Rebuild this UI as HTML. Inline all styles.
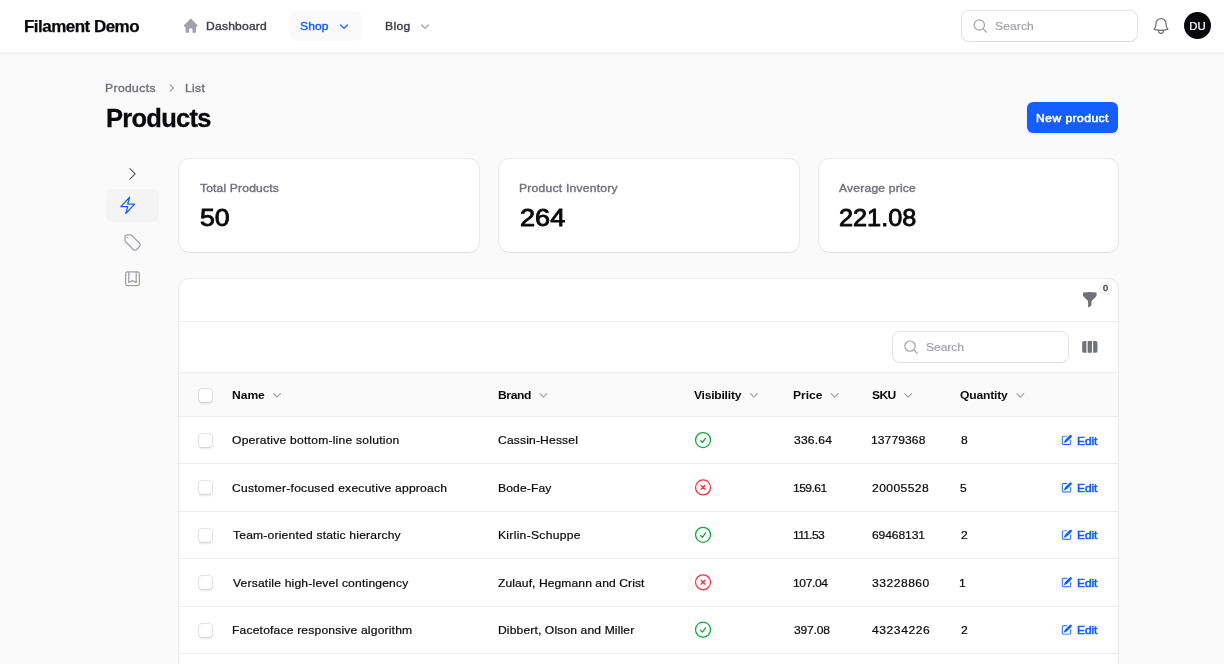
<!DOCTYPE html>
<html lang="en">
<head>
<meta charset="utf-8">
<title>Products - Filament Demo</title>
<style>
*{box-sizing:border-box;margin:0;padding:0}
html,body{width:1224px;height:664px;overflow:hidden}
body{background:#fafafa;font-family:"Liberation Sans",sans-serif;color:#09090b;position:relative;font-size:12px}
.app{position:absolute;left:0;top:0;width:1224px;height:664px;overflow:hidden;will-change:transform}
.abs,.t{position:absolute}
.t{white-space:nowrap;line-height:16px;font-size:11.200px;-webkit-text-stroke:.2px currentColor;transform:scaleX(1.08);transform-origin:0 0}
.c{text-align:center;transform-origin:50% 0}
svg{position:absolute;display:block;overflow:visible}
.topbar{position:absolute;left:0;top:0;width:1224px;height:52px;background:#fff;box-shadow:0 1px 0 #f4f4f5,0 2px 0 #eeeeef}
.card{position:absolute;background:#fff;border-radius:10px;box-shadow:0 0 0 1px rgba(9,9,11,.06),0 1px 2px rgba(9,9,11,.06)}
.input{position:absolute;background:#fff;border-radius:7px;box-shadow:0 0 0 1px rgba(9,9,11,.1),0 1px 2px rgba(9,9,11,.05)}
.gray{color:#71717a}
.ph{color:#a1a1aa}
.blue{color:#155dfc}
.b{font-weight:bold;-webkit-text-stroke:0}
.m{-webkit-text-stroke:.38px currentColor}
.sb{-webkit-text-stroke:.55px currentColor}
.hl{position:absolute;left:179px;width:939px;height:1px;background:#ececee}
.cb{position:absolute;left:199px;width:13px;height:13px;border-radius:3px;background:#fff;box-shadow:0 0 0 .75px rgba(9,9,11,.13),0 1.500px 2px rgba(9,9,11,.09)}
</style>
</head>
<body>
<div class="app">
<!-- TOPBAR -->
<div class="topbar"></div>
<div class="t b" id="brand" style="left:23.59px;top:14px;font-size:16.200px;line-height:24px;-webkit-text-stroke:.25px currentColor;letter-spacing:-0.496px;transform:scaleX(1.05)">Filament Demo</div>
<svg style="left:182px;top:17px" width="19" height="19" viewBox="-0.000 -0.000 21.714 21.714" fill="#a1a1aa"><path fill-rule="evenodd" clip-rule="evenodd" d="M9.293 2.293a1 1 0 0 1 1.414 0l7 7A1 1 0 0 1 17 11h-1v6a1 1 0 0 1-1 1h-2a1 1 0 0 1-1-1v-3a1 1 0 0 0-1-1H9a1 1 0 0 0-1 1v3a1 1 0 0 1-1 1H5a1 1 0 0 1-1-1v-6H3a1 1 0 0 1-.707-1.707l7-7Z"/></svg>
<div class="t m" id="dash" style="left:205.52px;top:18.100px;color:#3f3f46;letter-spacing:0.199px">Dashboard</div>
<div class="abs" style="left:290px;top:11px;width:72px;height:30px;border-radius:7px;background:#fafafa"></div>
<div class="t blue m" id="shop" style="left:299.86px;top:18.100px;letter-spacing:0.089px">Shop</div>
<svg style="left:336px;top:18px" width="17" height="17" viewBox="-0.000 -0.000 21.250 21.250" fill="#155dfc"><path fill-rule="evenodd" clip-rule="evenodd" d="M5.22 8.22a.75.75 0 0 1 1.06 0L10 11.94l3.72-3.72a.75.75 0 1 1 1.06 1.06l-4.25 4.25a.75.75 0 0 1-1.06 0L5.22 9.28a.75.75 0 0 1 0-1.06Z"/></svg>
<div class="t m" id="blog" style="left:384.59px;top:18.100px;color:#3f3f46;letter-spacing:0.342px">Blog</div>
<svg style="left:417px;top:18px" width="17" height="17" viewBox="-0.000 -0.000 21.250 21.250" fill="#a1a1aa"><path fill-rule="evenodd" clip-rule="evenodd" d="M5.22 8.22a.75.75 0 0 1 1.06 0L10 11.94l3.72-3.72a.75.75 0 1 1 1.06 1.06l-4.25 4.25a.75.75 0 0 1-1.06 0L5.22 9.28a.75.75 0 0 1 0-1.06Z"/></svg>
<div class="input" style="left:962px;top:11px;width:175px;height:30px"></div>
<svg style="left:972px;top:17px" width="18" height="18" viewBox="-0.145 -1.164 26.182 26.182" fill="none" stroke="#a1a1aa" stroke-width="1.7" stroke-linecap="round" stroke-linejoin="round"><path d="m21 21-5.197-5.197m0 0A7.500 7.500 0 1 0 5.196 5.196a7.500 7.500 0 0 0 10.607 10.607Z"/></svg>
<div class="t ph" id="search1" style="left:994.54px;top:18.300px;letter-spacing:0.091px">Search</div>
<svg style="left:1151px;top:16px" width="21" height="21" viewBox="-0.000 -0.000 25.200 25.200" fill="none" stroke="#71717a" stroke-width="1.5" stroke-linecap="round" stroke-linejoin="round"><path d="M14.857 17.082a23.848 23.848 0 0 0 5.454-1.310A8.967 8.967 0 0 1 18 9.750V9A6 6 0 0 0 6 9v.750a8.967 8.967 0 0 1-2.312 6.022c1.733.640 3.560 1.085 5.455 1.310m5.714 0a24.255 24.255 0 0 1-5.714 0m5.714 0a3 3 0 1 1-5.714 0"/></svg>
<div class="abs" style="left:1184px;top:12.200px;width:27px;height:27px;border-radius:50%;background:#09090b"></div>
<div class="t c" id="du" style="left:1184px;top:17.700px;width:27px;color:#fff;font-size:10.500px">DU</div>

<!-- HEADER -->
<div class="t gray m" id="bc1" style="left:104.79px;top:80.300px;letter-spacing:0.370px">Products</div>
<svg style="left:163px;top:80px" width="17" height="17" viewBox="-0.000 -0.000 21.250 21.250" fill="#a1a1aa"><path fill-rule="evenodd" clip-rule="evenodd" d="M8.220 5.220a.75.75 0 0 1 1.060 0l4.250 4.250a.75.75 0 0 1 0 1.060l-4.250 4.250a.75.75 0 0 1-1.060-1.060L11.940 10 8.220 6.280a.75.75 0 0 1 0-1.060Z"/></svg>
<div class="t gray m" id="bc2" style="left:185.02px;top:80.300px;letter-spacing:0.328px">List</div>
<div class="t b" id="h1" style="left:106.09px;top:101.700px;font-size:25.500px;line-height:32px;-webkit-text-stroke:.3px currentColor;letter-spacing:-0.745px;transform:none">Products</div>
<div class="abs" style="left:1027px;top:102px;width:91px;height:30.500px;border-radius:6px;background:#155dfc;box-shadow:0 1px 2px rgba(9,9,11,.08)"></div>
<div class="t sb c" id="newp" style="left:1027px;top:109.900px;width:91px;color:#fff;letter-spacing:.42px">New product</div>

<!-- SUBNAV -->
<svg style="left:124px;top:165px" width="18" height="18" viewBox="-0.000 -0.565 25.412 25.412" fill="none" stroke="#52525b" stroke-width="1.5" stroke-linecap="round" stroke-linejoin="round"><path d="m8.250 4.500 7.500 7.500-7.500 7.500"/></svg>
<div class="abs" style="left:106px;top:189px;width:53px;height:33px;border-radius:7px;background:#f4f4f5"></div>
<svg style="left:117px;top:195px" width="21" height="21" viewBox="-0.840 -0.480 25.200 25.200" fill="none" stroke="#155dfc" stroke-width="1.5" stroke-linecap="round" stroke-linejoin="round"><path d="m3.750 13.500 10.500-11.250L12 10.500h8.250L9.750 21.750 12 13.500H3.750Z"/></svg>
<svg style="left:122px;top:232px" width="21" height="21" viewBox="-0.600 -0.480 25.200 25.200" fill="none" stroke="#a1a1aa" stroke-width="1.5" stroke-linecap="round" stroke-linejoin="round"><path d="M9.568 3H5.250A2.250 2.250 0 0 0 3 5.250v4.318c0 .597.237 1.170.659 1.591l9.581 9.581c.699.699 1.780.872 2.607.330a18.095 18.095 0 0 0 5.223-5.223c.542-.827.369-1.908-.330-2.607L11.160 3.660A2.250 2.250 0 0 0 9.568 3Z"/><path d="M6 6h.008v.008H6V6Z"/></svg>
<svg style="left:122px;top:268px" width="21" height="21" viewBox="-0.600 -0.960 25.200 25.200" fill="none" stroke="#a1a1aa" stroke-width="1.5" stroke-linecap="round" stroke-linejoin="round"><path d="M16.500 3.750V16.500L12 14.250 7.500 16.500V3.750m9 0H18A2.250 2.250 0 0 1 20.250 6v12A2.250 2.250 0 0 1 18 20.250H6A2.250 2.250 0 0 1 3.750 18V6A2.250 2.250 0 0 1 6 3.750h1.500m9 0h-9"/></svg>

<!-- STATS -->
<div class="card" style="left:179px;top:159px;width:300px;height:93px"></div>
<div class="card" style="left:499px;top:159px;width:300px;height:93px"></div>
<div class="card" style="left:819px;top:159px;width:299px;height:93px"></div>
<div class="t gray m" id="s1l" style="left:199.66px;top:180.100px;letter-spacing:0.152px">Total Products</div>
<div class="t" id="s1v" style="-webkit-text-stroke:.85px currentColor;left:199.900px;top:201.500px;font-size:24.300px;line-height:32px;transform:scaleX(1.10);transform-origin:0 0">50</div>
<div class="t gray m" id="s2l" style="left:519.21px;top:180.100px;letter-spacing:0.224px">Product Inventory</div>
<div class="t" id="s2v" style="-webkit-text-stroke:.85px currentColor;left:519.600px;top:201.500px;font-size:24.300px;line-height:32px;transform:scaleX(1.117);transform-origin:0 0">264</div>
<div class="t gray m" id="s3l" style="left:838.76px;top:180.100px;letter-spacing:0.194px">Average price</div>
<div class="t" id="s3v" style="-webkit-text-stroke:.85px currentColor;left:838.900px;top:201.500px;font-size:24.300px;line-height:32px;transform:scaleX(1.04);transform-origin:0 0">221.08</div>

<!-- TABLE -->
<div class="card" style="left:179px;top:279px;width:939px;height:420px"></div>
<svg style="left:1081px;top:291px" width="18" height="18" viewBox="-0.353 -0.235 21.176 21.176" fill="#71717a"><path fill-rule="evenodd" clip-rule="evenodd" d="M2.628 1.601C5.028 1.206 7.490 1 10 1s4.973.206 7.372.601a.75.75 0 0 1 .628.740v2.288a2.250 2.250 0 0 1-.659 1.590l-4.682 4.683a2.250 2.250 0 0 0-.659 1.590v3.037c0 .684-.310 1.330-.844 1.757l-1.937 1.550A.75.75 0 0 1 8 18.250v-5.757a2.250 2.250 0 0 0-.659-1.591L2.659 6.220A2.250 2.250 0 0 1 2 4.629V2.340a.75.75 0 0 1 .628-.740Z"/></svg>
<div class="abs" style="left:1099.500px;top:282.800px;width:11px;height:11px;border-radius:50%;background:#fafafa;box-shadow:0 0 0 1px rgba(9,9,11,.08)"></div>
<div class="t m c" id="badge" style="left:1099.500px;top:282.300px;width:11px;line-height:12px;font-size:8.500px;color:#3f3f46">0</div>
<div class="hl" style="top:321px"></div>
<div class="input" style="left:893px;top:332px;width:175px;height:30px"></div>
<svg style="left:902px;top:338px" width="18" height="18" viewBox="-1.164 -1.309 26.182 26.182" fill="none" stroke="#a1a1aa" stroke-width="1.7" stroke-linecap="round" stroke-linejoin="round"><path d="m21 21-5.197-5.197m0 0A7.500 7.500 0 1 0 5.196 5.196a7.500 7.500 0 0 0 10.607 10.607Z"/></svg>
<div class="t ph" id="search2" style="left:925.92px;top:339.300px;letter-spacing:-0.043px">Search</div>
<svg style="left:1081px;top:338px" width="18" height="18" viewBox="-0.353 -0.471 21.176 21.176" fill="#71717a"><path d="M14 17h2.750A2.250 2.250 0 0 0 19 14.750v-9.500A2.250 2.250 0 0 0 16.750 3H14v14ZM12.500 3h-5v14h5V3ZM3.250 3H6v14H3.250A2.250 2.250 0 0 1 1 14.750v-9.500A2.250 2.250 0 0 1 3.250 3Z"/></svg>
<div class="hl" style="top:372px"></div>
<div class="abs" style="left:179px;top:373px;width:939px;height:43px;background:#fafafa"></div>
<div class="hl" style="top:416px"></div>
<div class="cb" style="top:389px"></div>
<div class="t b" id="th0" style="left:231.79px;top:386.8px;letter-spacing:-0.028px">Name</div>
<svg style="left:269px;top:386px" width="17" height="17" viewBox="-0.000 -0.750 21.250 21.250" fill="#a1a1aa"><path fill-rule="evenodd" clip-rule="evenodd" d="M5.22 8.22a.75.75 0 0 1 1.06 0L10 11.94l3.72-3.72a.75.75 0 1 1 1.06 1.06l-4.25 4.25a.75.75 0 0 1-1.06 0L5.220 9.280a.75.75 0 0 1 0-1.060Z"/></svg>
<div class="t b" id="th1" style="left:497.85px;top:386.8px;letter-spacing:-0.327px">Brand</div>
<svg style="left:535px;top:386px" width="17" height="17" viewBox="-0.500 -0.750 21.250 21.250" fill="#a1a1aa"><path fill-rule="evenodd" clip-rule="evenodd" d="M5.22 8.22a.75.75 0 0 1 1.06 0L10 11.94l3.72-3.72a.75.75 0 1 1 1.06 1.06l-4.25 4.25a.75.75 0 0 1-1.06 0L5.220 9.280a.75.75 0 0 1 0-1.060Z"/></svg>
<div class="t b" id="th2" style="left:694.25px;top:386.8px;letter-spacing:-0.214px">Visibility</div>
<svg style="left:745px;top:386px" width="17" height="17" viewBox="-1.125 -0.750 21.250 21.250" fill="#a1a1aa"><path fill-rule="evenodd" clip-rule="evenodd" d="M5.22 8.22a.75.75 0 0 1 1.06 0L10 11.94l3.72-3.72a.75.75 0 1 1 1.06 1.06l-4.25 4.25a.75.75 0 0 1-1.06 0L5.220 9.280a.75.75 0 0 1 0-1.060Z"/></svg>
<div class="t b" id="th3" style="left:793.00px;top:386.8px;letter-spacing:-0.036px">Price</div>
<svg style="left:826px;top:386px" width="17" height="17" viewBox="-0.875 -0.750 21.250 21.250" fill="#a1a1aa"><path fill-rule="evenodd" clip-rule="evenodd" d="M5.22 8.22a.75.75 0 0 1 1.06 0L10 11.94l3.72-3.72a.75.75 0 1 1 1.06 1.06l-4.25 4.25a.75.75 0 0 1-1.06 0L5.220 9.280a.75.75 0 0 1 0-1.060Z"/></svg>
<div class="t b" id="th4" style="left:871.66px;top:386.8px;letter-spacing:-0.574px">SKU</div>
<svg style="left:900px;top:386px" width="17" height="17" viewBox="-0.125 -0.750 21.250 21.250" fill="#a1a1aa"><path fill-rule="evenodd" clip-rule="evenodd" d="M5.22 8.22a.75.75 0 0 1 1.06 0L10 11.94l3.72-3.72a.75.75 0 1 1 1.06 1.06l-4.25 4.25a.75.75 0 0 1-1.06 0L5.220 9.280a.75.75 0 0 1 0-1.060Z"/></svg>
<div class="t b" id="th5" style="left:960.17px;top:386.8px;letter-spacing:-0.155px">Quantity</div>
<svg style="left:1012px;top:386px" width="17" height="17" viewBox="-0.375 -0.750 21.250 21.250" fill="#a1a1aa"><path fill-rule="evenodd" clip-rule="evenodd" d="M5.22 8.22a.75.75 0 0 1 1.06 0L10 11.94l3.72-3.72a.75.75 0 1 1 1.06 1.06l-4.25 4.25a.75.75 0 0 1-1.06 0L5.220 9.280a.75.75 0 0 1 0-1.060Z"/></svg>
<!-- row 1 -->
<div class="cb" style="top:434.0px"></div>
<div class="t" id="r0n" style="left:232.29px;top:432.3px;letter-spacing:0.218px">Operative bottom-line solution</div>
<div class="t" id="r0b" style="left:497.79px;top:432.3px;letter-spacing:0.153px">Cassin-Hessel</div>
<svg style="left:693px;top:430px" width="21" height="21" viewBox="-0.060 -0.060 25.200 25.200" fill="none" stroke="#0fa83a" stroke-width="1.5" stroke-linecap="round" stroke-linejoin="round"><path d="M9 12.750 11.250 15 15 9.750M21 12a9 9 0 1 1-18 0 9 9 0 0 1 18 0Z"/></svg>
<div class="t" id="r0p" style="left:793.56px;top:432.3px;letter-spacing:0.198px">336.64</div>
<div class="t" id="r0s" style="left:870.90px;top:432.3px;letter-spacing:0.079px">13779368</div>
<div class="t" id="r0q" style="left:960.62px;top:432.3px;letter-spacing:0.000px">8</div>
<svg style="left:1060px;top:433px" width="14" height="14" viewBox="-0.896 -1.200 22.400 22.400" fill="#155dfc"><path d="m5.433 13.917 1.262-3.155A4 4 0 0 1 7.580 9.420l6.920-6.918a2.121 2.121 0 0 1 3 3l-6.920 6.918c-.383.383-.840.685-1.343.886l-3.154 1.262a.5.5 0 0 1-.650-.650Z"/><path d="M3.500 5.750c0-.690.560-1.250 1.250-1.250H10A.75.75 0 0 0 10 3H4.750A2.750 2.750 0 0 0 2 5.750v9.500A2.750 2.750 0 0 0 4.750 18h9.500A2.750 2.750 0 0 0 17 15.250V10a.75.75 0 0 0-1.500 0v5.250c0 .690-.560 1.250-1.250 1.250h-9.500c-.690 0-1.250-.560-1.250-1.250v-9.500Z"/></svg>
<div class="t blue sb" id="r0e" style="left:1077.42px;top:432.6px;letter-spacing:-0.124px">Edit</div>
<div class="hl" style="top:463px"></div>
<!-- row 2 -->
<div class="cb" style="top:481.4px"></div>
<div class="t" id="r1n" style="left:231.82px;top:479.7px;letter-spacing:0.223px">Customer-focused executive approach</div>
<div class="t" id="r1b" style="left:497.85px;top:479.7px;letter-spacing:0.134px">Bode-Fay</div>
<svg style="left:693px;top:477px" width="21" height="21" viewBox="-0.060 -0.540 25.200 25.200" fill="none" stroke="#fb2c36" stroke-width="1.5" stroke-linecap="round" stroke-linejoin="round"><path d="m9.650 9.650 4.700 4.700m0-4.700-4.700 4.700M21 12a9 9 0 1 1-18 0 9 9 0 0 1 18 0Z"/></svg>
<div class="t" id="r1p" style="left:793.41px;top:479.7px;letter-spacing:-0.514px">159.61</div>
<div class="t" id="r1s" style="left:871.72px;top:479.7px;letter-spacing:0.384px">20005528</div>
<div class="t" id="r1q" style="left:960.06px;top:479.7px;letter-spacing:0.000px">5</div>
<svg style="left:1060px;top:481px" width="14" height="14" viewBox="-0.896 -0.240 22.400 22.400" fill="#155dfc"><path d="m5.433 13.917 1.262-3.155A4 4 0 0 1 7.580 9.420l6.920-6.918a2.121 2.121 0 0 1 3 3l-6.920 6.918c-.383.383-.840.685-1.343.886l-3.154 1.262a.5.5 0 0 1-.650-.650Z"/><path d="M3.500 5.750c0-.690.560-1.250 1.250-1.250H10A.75.75 0 0 0 10 3H4.750A2.750 2.750 0 0 0 2 5.750v9.500A2.750 2.750 0 0 0 4.750 18h9.500A2.750 2.750 0 0 0 17 15.250V10a.75.75 0 0 0-1.500 0v5.250c0 .690-.560 1.250-1.250 1.250h-9.500c-.690 0-1.250-.560-1.250-1.250v-9.500Z"/></svg>
<div class="t blue sb" id="r1e" style="left:1077.39px;top:480.0px;letter-spacing:-0.133px">Edit</div>
<div class="hl" style="top:511px"></div>
<!-- row 3 -->
<div class="cb" style="top:528.8px"></div>
<div class="t" id="r2n" style="left:232.59px;top:527.1px;letter-spacing:0.186px">Team-oriented static hierarchy</div>
<div class="t" id="r2b" style="left:497.99px;top:527.1px;letter-spacing:0.275px">Kirlin-Schuppe</div>
<svg style="left:693px;top:524px" width="21" height="21" viewBox="-0.060 -1.020 25.200 25.200" fill="none" stroke="#0fa83a" stroke-width="1.5" stroke-linecap="round" stroke-linejoin="round"><path d="M9 12.750 11.250 15 15 9.750M21 12a9 9 0 1 1-18 0 9 9 0 0 1 18 0Z"/></svg>
<div class="t" id="r2p" style="left:793.48px;top:527.1px;letter-spacing:-0.638px">111.53</div>
<div class="t" id="r2s" style="left:871.91px;top:527.1px;letter-spacing:-0.097px">69468131</div>
<div class="t" id="r2q" style="left:960.63px;top:527.1px;letter-spacing:0.000px">2</div>
<svg style="left:1060px;top:528px" width="14" height="14" viewBox="-0.896 -0.880 22.400 22.400" fill="#155dfc"><path d="m5.433 13.917 1.262-3.155A4 4 0 0 1 7.580 9.420l6.920-6.918a2.121 2.121 0 0 1 3 3l-6.920 6.918c-.383.383-.840.685-1.343.886l-3.154 1.262a.5.5 0 0 1-.650-.650Z"/><path d="M3.500 5.750c0-.690.560-1.250 1.250-1.250H10A.75.75 0 0 0 10 3H4.750A2.750 2.750 0 0 0 2 5.750v9.500A2.750 2.750 0 0 0 4.750 18h9.500A2.750 2.750 0 0 0 17 15.250V10a.75.75 0 0 0-1.500 0v5.250c0 .690-.560 1.250-1.250 1.250h-9.500c-.690 0-1.250-.560-1.250-1.250v-9.500Z"/></svg>
<div class="t blue sb" id="r2e" style="left:1077.41px;top:527.4px;letter-spacing:-0.135px">Edit</div>
<div class="hl" style="top:558px"></div>
<!-- row 4 -->
<div class="cb" style="top:576.2px"></div>
<div class="t" id="r3n" style="left:232.75px;top:574.5px;letter-spacing:0.181px">Versatile high-level contingency</div>
<div class="t" id="r3b" style="left:498.46px;top:574.5px;letter-spacing:0.077px">Zulauf, Hegmann and Crist</div>
<svg style="left:693px;top:572px" width="21" height="21" viewBox="-0.060 -0.300 25.200 25.200" fill="none" stroke="#fb2c36" stroke-width="1.5" stroke-linecap="round" stroke-linejoin="round"><path d="m9.650 9.650 4.700 4.700m0-4.700-4.700 4.700M21 12a9 9 0 1 1-18 0 9 9 0 0 1 18 0Z"/></svg>
<div class="t" id="r3p" style="left:793.42px;top:574.5px;letter-spacing:-0.371px">107.04</div>
<div class="t" id="r3s" style="left:871.65px;top:574.5px;letter-spacing:0.471px">33228860</div>
<div class="t" id="r3q" style="left:959.41px;top:574.5px;letter-spacing:0.000px">1</div>
<svg style="left:1060px;top:575px" width="14" height="14" viewBox="-0.896 -1.520 22.400 22.400" fill="#155dfc"><path d="m5.433 13.917 1.262-3.155A4 4 0 0 1 7.580 9.420l6.920-6.918a2.121 2.121 0 0 1 3 3l-6.920 6.918c-.383.383-.840.685-1.343.886l-3.154 1.262a.5.5 0 0 1-.650-.650Z"/><path d="M3.500 5.750c0-.690.560-1.250 1.250-1.250H10A.75.75 0 0 0 10 3H4.750A2.750 2.750 0 0 0 2 5.750v9.500A2.750 2.750 0 0 0 4.750 18h9.500A2.750 2.750 0 0 0 17 15.250V10a.75.75 0 0 0-1.500 0v5.250c0 .690-.560 1.250-1.250 1.250h-9.500c-.690 0-1.250-.560-1.250-1.250v-9.500Z"/></svg>
<div class="t blue sb" id="r3e" style="left:1077.46px;top:574.8px;letter-spacing:-0.154px">Edit</div>
<div class="hl" style="top:606px"></div>
<!-- row 5 -->
<div class="cb" style="top:623.6px"></div>
<div class="t" id="r4n" style="left:231.70px;top:621.9px;letter-spacing:0.170px">Facetoface responsive algorithm</div>
<div class="t" id="r4b" style="left:498.40px;top:621.9px;letter-spacing:0.124px">Dibbert, Olson and Miller</div>
<svg style="left:693px;top:619px" width="21" height="21" viewBox="-0.060 -0.780 25.200 25.200" fill="none" stroke="#0fa83a" stroke-width="1.5" stroke-linecap="round" stroke-linejoin="round"><path d="M9 12.750 11.250 15 15 9.750M21 12a9 9 0 1 1-18 0 9 9 0 0 1 18 0Z"/></svg>
<div class="t" id="r4p" style="left:794.40px;top:621.9px;letter-spacing:-0.188px">397.08</div>
<div class="t" id="r4s" style="left:872.36px;top:621.9px;letter-spacing:0.522px">43234226</div>
<div class="t" id="r4q" style="left:960.64px;top:621.9px;letter-spacing:0.000px">2</div>
<svg style="left:1060px;top:623px" width="14" height="14" viewBox="-0.896 -0.560 22.400 22.400" fill="#155dfc"><path d="m5.433 13.917 1.262-3.155A4 4 0 0 1 7.580 9.420l6.920-6.918a2.121 2.121 0 0 1 3 3l-6.920 6.918c-.383.383-.840.685-1.343.886l-3.154 1.262a.5.5 0 0 1-.650-.650Z"/><path d="M3.500 5.750c0-.690.560-1.250 1.250-1.250H10A.75.75 0 0 0 10 3H4.750A2.750 2.750 0 0 0 2 5.750v9.500A2.750 2.750 0 0 0 4.750 18h9.500A2.750 2.750 0 0 0 17 15.250V10a.75.75 0 0 0-1.500 0v5.250c0 .690-.560 1.250-1.250 1.250h-9.500c-.690 0-1.250-.560-1.250-1.250v-9.500Z"/></svg>
<div class="t blue sb" id="r4e" style="left:1077.36px;top:622.2px;letter-spacing:-0.126px">Edit</div>
<div class="hl" style="top:653px"></div>
</div>
</body>
</html>
